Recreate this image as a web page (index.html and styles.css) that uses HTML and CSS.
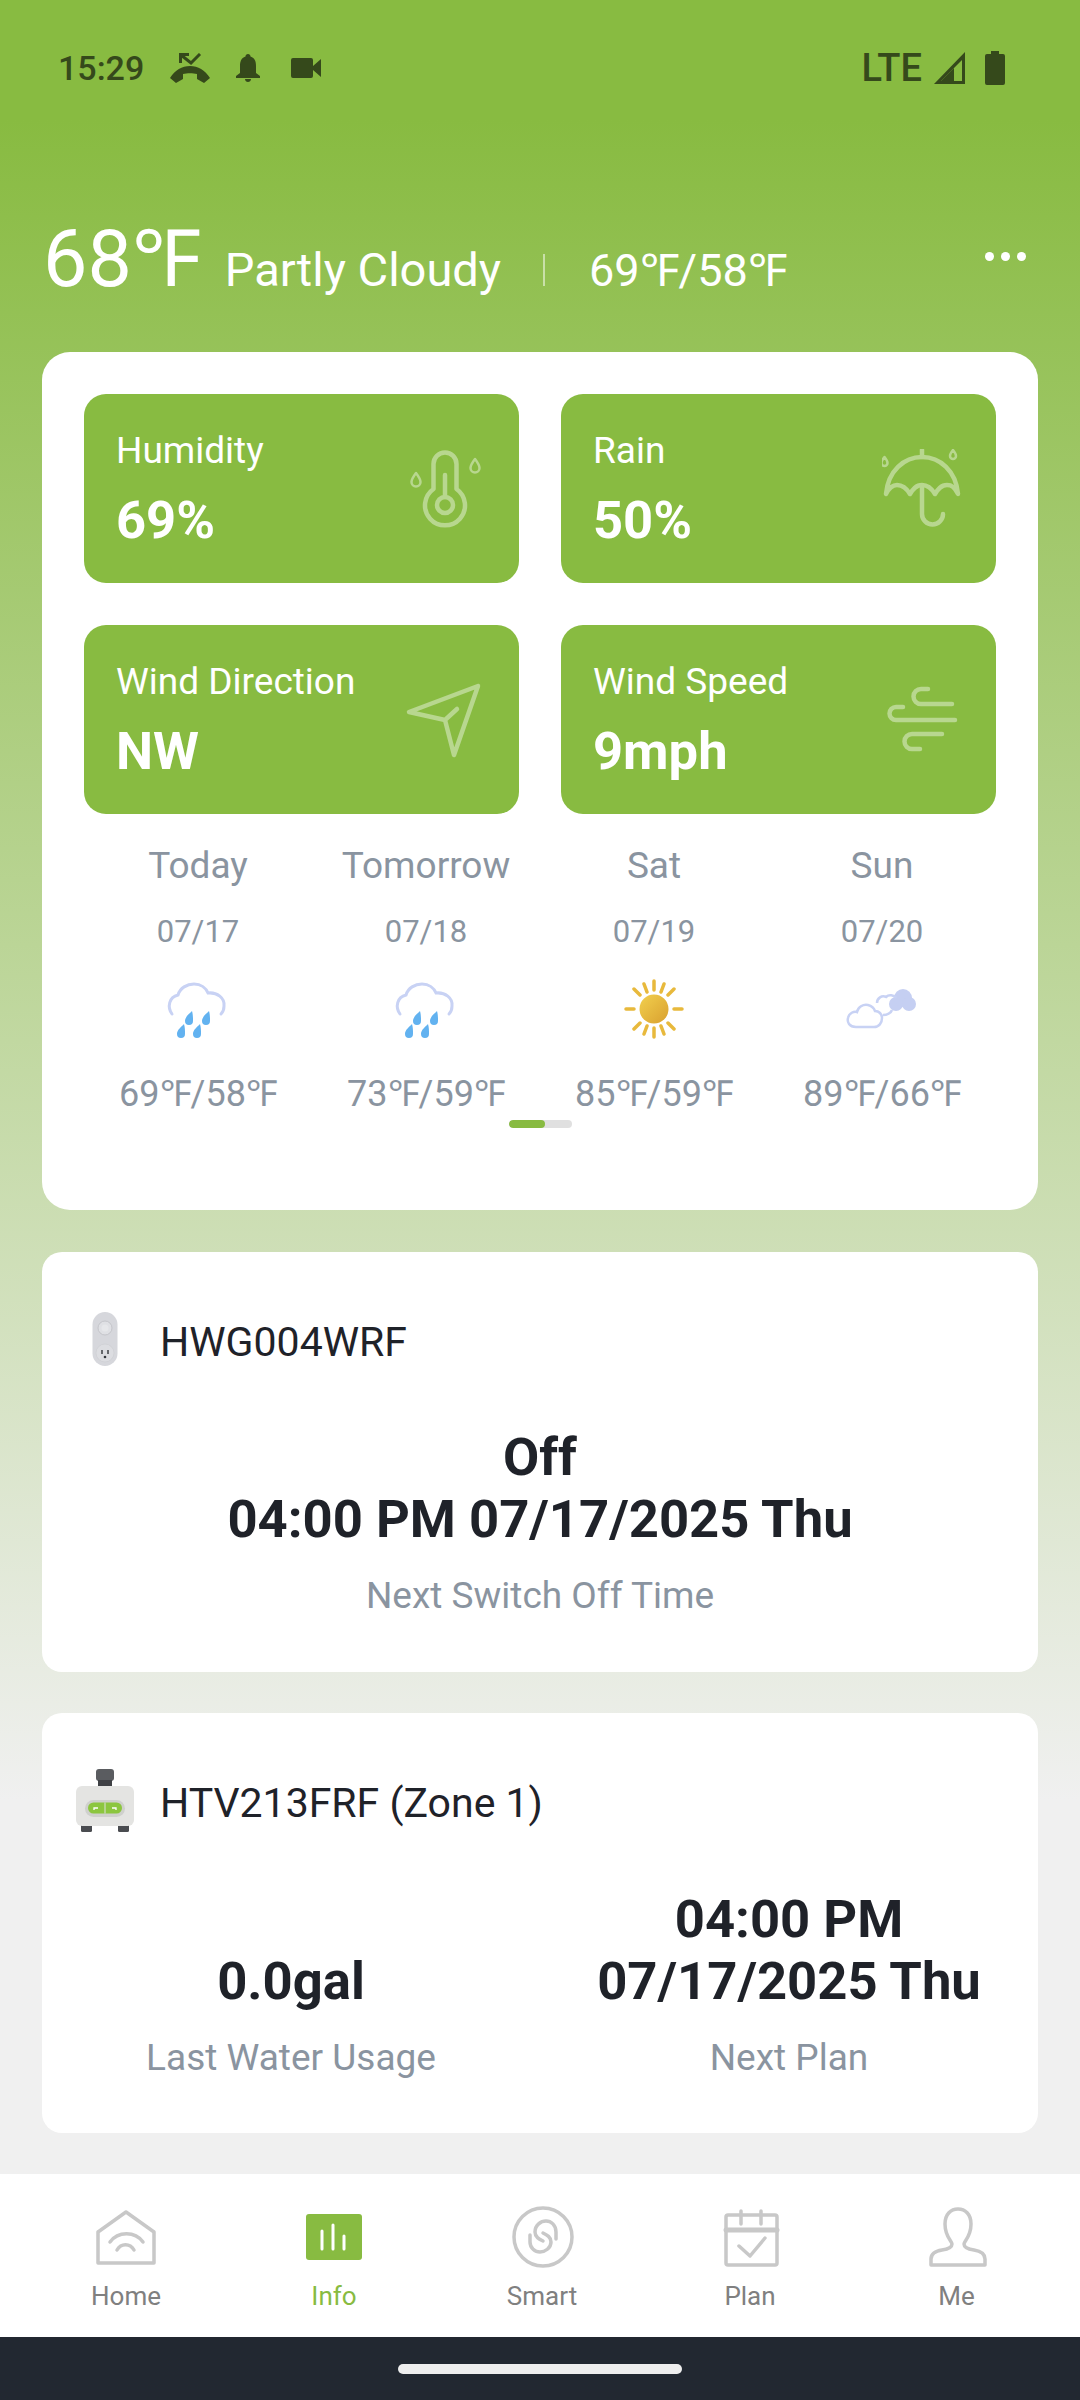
FILE: index.html
```html
<!DOCTYPE html>
<html lang="en">
<head>
  <meta charset="UTF-8" />
  <meta name="viewport" content="width=device-width, initial-scale=1.0"/>
  <title>Info</title>
  <link rel="stylesheet" href="styles.css">
</head>
<body>
  <div class="app">
    <div class="status-bar">
      <div class="status-left">
        <span class="status-time">15:29</span>
        <svg class="ic-call" viewBox="0 0 40 30"><path d="M0 25c5-8 12-12 20-12s15 4 20 12l-6 5-7-4v-5c-4-1-10-1-14 0v5l-7 4z" fill="#35491b"/><path d="M19 1.500h-8.500V10M11 2l10 8 9-9" fill="none" stroke="#35491b" stroke-width="3"/></svg>
        <svg class="ic-bell" viewBox="0 0 24 28"><path d="M12 0c1.500 0 2.500 1 2.500 2.500C19 4 20 8 20 12v7l4 3v2H0v-2l4-3v-7c0-4 1-8 5.500-9.500C9.500 1 10.500 0 12 0zM9 25h6c0 2-1.500 3-3 3s-3-1-3-3z" fill="#35491b"/></svg>
        <svg class="ic-video" viewBox="0 0 30 20"><path d="M2 0h18a2 2 0 0 1 2 2v6l8-7v18l-8-7v6a2 2 0 0 1-2 2H2a2 2 0 0 1-2-2V2a2 2 0 0 1 2-2z" fill="#35491b"/></svg>
      </div>
      <div class="status-right">
        <span class="status-lte">LTE</span>
        <svg class="ic-signal" viewBox="0 0 31 32"><path d="M31 0v32H0zM28 8L7 29h21z" fill="#35491b"/><path d="M20 16v13H7z" fill="#35491b"/></svg>
        <svg class="ic-battery" viewBox="0 0 20 34"><path d="M6 0h8v3h4a2 2 0 0 1 2 2v27a2 2 0 0 1-2 2H2a2 2 0 0 1-2-2V5a2 2 0 0 1 2-2h4z" fill="#35491b"/></svg>
      </div>
    </div>

    <div class="weather-head">
      <span class="temp-now">68℉</span>
      <span class="temp-desc">Partly Cloudy</span>
      <span class="temp-sep"></span>
      <span class="temp-range">69℉/58℉</span>
      <span class="more-dots"><i></i><i></i><i></i></span>
    </div>

    <div class="card weather-card">
      <div class="tiles">
        <div class="tile">
          <div class="tile-text"><div class="tile-label">Humidity</div><div class="tile-value">69%</div></div>
          <svg class="tile-icon" viewBox="0 0 80 80"><path d="M28.500 40V15a11.500 11.500 0 0 1 23 0v25a20 20 0 1 1-23 0z"/><path d="M40 26v22"/><circle cx="40" cy="56" r="8"/><path class="thin" d="M11 24c3 4 4.500 7 4.500 9a4.500 4.500 0 0 1-9 0c0-2 1.500-5 4.500-9zM70 10c3 4 4.500 7 4.500 9a4.500 4.500 0 0 1-9 0c0-2 1.500-5 4.500-9z"/></svg>
        </div>
        <div class="tile">
          <div class="tile-text"><div class="tile-label">Rain</div><div class="tile-value">50%</div></div>
          <svg class="tile-icon" viewBox="0 0 80 80"><path d="M4 45C6 22 22 8 40 8s34 14 36 37C72 38 70 36 65 36c-6 0-9 4-12 9-3-5-7-9-13-9s-9 4-12 9c-3-5-7-9-13-9-5 0-8 3-11 9z"/><path d="M40 1v7M40 37v28a10.500 10.500 0 0 0 21 0"/><path class="thin" d="M2.500 8c2 2.500 3 4.500 3 6a3 3 0 0 1-6 0c0-1.500 1-3.500 3-6zM71 1c2 2.500 3 4.500 3 6a3 3 0 0 1-6 0c0-1.500 1-3.500 3-6z"/></svg>
        </div>
        <div class="tile">
          <div class="tile-text"><div class="tile-label">Wind Direction</div><div class="tile-value">NW</div></div>
          <svg class="tile-icon" viewBox="0 0 80 80"><path d="M73 6L4 32l36 8 9 35zM40 40l12-11"/></svg>
        </div>
        <div class="tile">
          <div class="tile-text"><div class="tile-label">Wind Speed</div><div class="tile-value">9mph</div></div>
          <svg class="tile-icon" viewBox="0 0 80 80"><path d="M46 9h-7a7 7 0 0 0 0 15h31M21 27h-7a6.500 6.500 0 0 0 0 13h59M60 54H30a7.500 7.500 0 0 0 0 15h8"/></svg>
        </div>
      </div>

      <div class="forecast">
        <div class="day">
          <div class="day-name">Today</div>
          <div class="day-date">07/17</div>
          <svg class="day-icon" viewBox="0 0 72 60"><use href="#rain-cloud"/></svg>
          <div class="day-temp">69℉/58℉</div>
        </div>
        <div class="day">
          <div class="day-name">Tomorrow</div>
          <div class="day-date">07/18</div>
          <svg class="day-icon" viewBox="0 0 72 60"><use href="#rain-cloud"/></svg>
          <div class="day-temp">73℉/59℉</div>
        </div>
        <div class="day">
          <div class="day-name">Sat</div>
          <div class="day-date">07/19</div>
          <svg class="day-icon" viewBox="0 0 72 60">
            <defs><linearGradient id="sun-fill" x1="0" y1="0" x2="1" y2="1"><stop offset="0" stop-color="#f2d04e"/><stop offset="1" stop-color="#d9a02f"/></linearGradient></defs>
            <circle cx="36" cy="30" r="14.500" fill="url(#sun-fill)"/>
            <g stroke="#e8b93c" stroke-width="3.500" stroke-linecap="round">
              <path d="M36 2v9M36 49v9M8 30h8M56 30h8M16 10l6 6M50 44l6 6M16 50l6-6M50 16l6-6"/>
              <path d="M26 5l3 8M43 47l3 8M46 5l-3 8M29 47l-3 8"/>
            </g>
          </svg>
          <div class="day-temp">85℉/59℉</div>
        </div>
        <div class="day">
          <div class="day-name">Sun</div>
          <div class="day-date">07/20</div>
          <svg class="day-icon" viewBox="0 0 72 60">
            <circle cx="50" cy="25" r="7" fill="#c5cff2"/><circle cx="57" cy="19" r="9" fill="#c5cff2"/><circle cx="63" cy="25" r="7" fill="#c5cff2"/>
            <path d="M10 48c-7 0-9-5-8-9 1-5 6-7 9-6 1-5 6-8 11-7 4 1 6 3 7 6 4 0 7 3 7 7 0 5-3 9-8 9z" fill="#fff" stroke="#c8d2f4" stroke-width="2.500"/>
            <path d="M31 24c0-5 5-8 9-6 3-3 8-2 10 1" fill="none" stroke="#c8d2f4" stroke-width="2.500"/>
            <path d="M37 36c4 0 8-2 9-5" fill="none" stroke="#c8d2f4" stroke-width="2.500"/>
          </svg>
          <div class="day-temp">89℉/66℉</div>
        </div>
      </div>
      <div class="scroll-track"><div class="scroll-thumb"></div></div>
    </div>

    <div class="card device-card">
      <div class="device-head">
        <svg class="device-icon" viewBox="0 0 64 64">
          <rect x="19.500" y="5" width="25" height="54" rx="12.500" fill="#d6d7dc"/>
          <circle cx="32" cy="21" r="7" fill="#dfe0e4" stroke="#c4c5ca"/><circle cx="32" cy="21" r="3.500" fill="#e6e7ea"/>
          <circle cx="32" cy="46" r="9" fill="#dcdde1" stroke="#cdced3" stroke-width=".7"/>
          <path d="M29 43v4M35 43v4" stroke="#33363b" stroke-width="1.400"/><circle cx="32" cy="50" r="1.300" fill="#33363b"/>
        </svg>
        <span class="device-name">HWG004WRF</span>
      </div>
      <div class="stat-single">
        <div class="stat-value">Off<br>04:00 PM 07/17/2025 Thu</div>
        <div class="stat-label">Next Switch Off Time</div>
      </div>
    </div>

    <div class="card device-card">
      <div class="device-head">
        <svg class="device-icon" viewBox="0 0 64 64">
          <rect x="23" y="1" width="18" height="12" rx="3" fill="#5a5c60"/><rect x="25" y="12" width="14" height="6" fill="#3f4145"/>
          <rect x="8" y="52" width="11" height="12" rx="1.500" fill="#4a4c50"/><rect x="45" y="52" width="11" height="12" rx="1.500" fill="#4a4c50"/>
          <rect x="3" y="18" width="58" height="40" rx="6" fill="#e4e4e2"/>
          <rect x="12" y="32" width="40" height="17" rx="8.500" fill="#cfd0cd"/>
          <rect x="15" y="34.500" width="34" height="11" rx="5.500" fill="#8cc63f"/>
          <path d="M32 34.500v11" stroke="#dfe0de"/>
          <path d="M21 42v-2h4M43 42v-2h-4" stroke="#fff" stroke-width="1.300" fill="none"/>
        </svg>
        <span class="device-name">HTV213FRF (Zone 1)</span>
      </div>
      <div class="stat-pair">
        <div class="stat-col">
          <div class="stat-value">0.0gal</div>
          <div class="stat-label">Last Water Usage</div>
        </div>
        <div class="stat-col">
          <div class="stat-value">04:00 PM<br>07/17/2025 Thu</div>
          <div class="stat-label">Next Plan</div>
        </div>
      </div>
    </div>

    <div class="tab-bar">
      <div class="tab">
        <svg class="tab-icon" viewBox="0 0 64 64"><path d="M4 57V26L32 6l28 20v31z"/><path d="M16 36c8-11 25-11 33 0M23 44c4-7 13-7 17 0"/></svg>
        <span>Home</span>
      </div>
      <div class="tab active">
        <svg class="tab-icon" viewBox="0 0 64 64"><rect x="4" y="8" width="56" height="46" rx="3" class="solid"/><path class="bars" d="M20 25v18M31 19v24M42 30v13"/></svg>
        <span>Info</span>
      </div>
      <div class="tab">
        <svg class="tab-icon" viewBox="0 0 64 64"><circle cx="33" cy="31" r="29"/><path d="M46 33v-7c0-7-5-11-10-11s-11 4-11 11c0 5 4 7 8 9"/><path d="M20 29v7c0 6 5 10 10 10s11-4 11-10c0-5-4-7-8-9"/></svg>
        <span>Smart</span>
      </div>
      <div class="tab">
        <svg class="tab-icon" viewBox="0 0 64 64"><rect x="8" y="9" width="51" height="50" rx="2"/><path class="wide" d="M8 24h51"/><path d="M23 5v13M43 5v13M21 40l11 10 15-18"/></svg>
        <span>Plan</span>
      </div>
      <div class="tab">
        <svg class="tab-icon" viewBox="0 0 64 64"><path d="M6 59v-6c0-5 5-8 11-9 7-1 10-3 10-6 0-3-7-7-7-20 0-10 6-15 13-15s13 5 13 15c0 13-7 17-7 20 0 3 3 5 10 6 6 1 11 4 11 9v6z"/></svg>
        <span>Me</span>
      </div>
    </div>

    <div class="nav-bar"><div class="home-pill"></div></div>
  </div>

  <svg class="icon-defs" width="0" height="0">
    <defs>
      <g id="rain-cloud">
        <path d="M10 35C5 28 7 18 16 16c2-7 9-11 16-11s12 4 14 9c9-1 17 5 16 13 0 3-1 6-3 8" fill="none" stroke="#c8d2f4" stroke-width="3" stroke-linecap="round"/>
        <path d="M30 32c-3 3-7 6-7 10a4 4 0 0 0 8 0c0-3 0-7-1-10zM47 32c-3 3-7 6-7 10a4 4 0 0 0 8 0c0-3 0-7-1-10zM22 45c-3 3-7 6-7 10a4 4 0 0 0 8 0c0-3 0-7-1-10zM38 45c-3 3-7 6-7 10a4 4 0 0 0 8 0c0-3 0-7-1-10z" fill="#62b2f0"/>
      </g>
    </defs>
  </svg>
</body>
</html>
```

FILE: styles.css
```css
* {
  box-sizing: border-box;
}

body {
  margin: 0;
  padding: 0;
  font-family: Roboto, sans-serif;
  background-color: #f0f0f0;
}

.app {
  width: 1080px;
  height: 2400px;
  overflow: hidden;
  display: flex;
  flex-direction: column;
  background: linear-gradient(to bottom, #88bb41 120px, #f0f0f0 1800px);
}

.status-bar {
  height: 136px;
  padding: 50px 75px 0 58px;
  display: flex;
  justify-content: space-between;
  align-items: flex-start;
  color: #35491b;
}

.status-left,
.status-right {
  display: flex;
  align-items: center;
  height: 36px;
}

.status-time {
  font-size: 34px;
  font-weight: 500;
  margin-right: 26px;
}

.ic-call { width: 40px; height: 30px; margin-right: 26px; }
.ic-bell { width: 24px; height: 28px; margin-right: 31px; }
.ic-video { width: 30px; height: 20px; }

.status-lte {
  font-size: 38px;
  font-weight: 500;
  margin-right: 12px;
}

.ic-signal { width: 31px; height: 32px; margin-right: 20px; }
.ic-battery { width: 20px; height: 34px; }

.weather-head {
  height: 216px;
  padding: 66px 0 0 43px;
  display: flex;
  align-items: baseline;
  color: white;
  position: relative;
}

.temp-now {
  font-size: 79px;
  margin-right: 24px;
}

.temp-desc {
  font-size: 47px;
}

.temp-sep {
  width: 2px;
  height: 32px;
  background-color: rgba(255,255,255,0.5);
  margin: 0 44px 0 42px;
}

.temp-range {
  font-size: 45px;
}

.more-dots {
  position: absolute;
  top: 116px;
  left: 985px;
  display: flex;
  gap: 7px;
}

.more-dots i {
  width: 9px;
  height: 9px;
  border-radius: 50%;
  background-color: white;
}

.card {
  background-color: white;
  margin: 0 42px;
  border-radius: 20px;
}

.weather-card {
  height: 858px;
  padding: 42px;
  border-radius: 28px;
}

.tiles {
  display: grid;
  grid-template-columns: 435px 435px;
  grid-auto-rows: 189px;
  gap: 42px;
}

.tile {
  background-color: #88bb41;
  border-radius: 22px;
  padding: 0 34px 0 32px;
  display: flex;
  justify-content: space-between;
  align-items: center;
  color: white;
}

.tile-text {
  padding-top: 2px;
}

.tile-label {
  font-size: 37px;
  line-height: 44px;
  margin-bottom: 17px;
}

.tile-value {
  font-size: 52.500px;
  font-weight: 700;
  line-height: 60px;
}

.tile-icon {
  width: 80px;
  height: 80px;
  fill: none;
  stroke: #b8d78f;
  stroke-width: 4.500;
  stroke-linecap: round;
  stroke-linejoin: round;
}

.tile-icon .thin {
  stroke-width: 2.500;
}

.forecast {
  display: grid;
  grid-template-columns: repeat(4, 228px);
  margin-top: 30px;
  text-align: center;
  color: #8a94a0;
}

.day-name {
  font-size: 37px;
  line-height: 44px;
}

.day-date {
  font-size: 31px;
  line-height: 40px;
  margin-top: 24px;
}

.day-icon {
  display: block;
  width: 72px;
  height: 60px;
  margin: 27px auto 0;
}

.day-temp {
  font-size: 36px;
  line-height: 44px;
  margin-top: 33px;
}

.scroll-track {
  width: 63px;
  height: 8px;
  margin: 4px auto 0;
  background-color: #e0e0e0;
  border-radius: 4px;
  overflow: hidden;
}

.scroll-thumb {
  width: 36px;
  height: 8px;
  background-color: #88bb41;
  border-radius: 4px;
}

.device-card {
  height: 420px;
  margin-top: 42px;
  padding-top: 55px;
}

.device-card + .device-card {
  margin-top: 41px;
}

.device-head {
  display: flex;
  align-items: center;
  padding-left: 31px;
  gap: 23px;
}

.device-icon {
  width: 64px;
  height: 64px;
}

.device-name {
  font-size: 41px;
  margin-top: 5px;
  color: #1f2229;
}

.stat-single {
  margin-top: 55px;
  text-align: center;
}

.stat-value {
  font-size: 52.600px;
  line-height: 62px;
  font-weight: 700;
  color: #1f2229;
}

.stat-label {
  font-size: 37px;
  line-height: 44px;
  color: #8a94a0;
  margin-top: 24px;
}

.stat-pair {
  margin-top: 56px;
  display: grid;
  grid-template-columns: 1fr 1fr;
  align-items: end;
  text-align: center;
}

.tab-bar {
  height: 163px;
  margin-top: 41px;
  background-color: white;
  padding: 32px 22px 0;
  display: grid;
  grid-template-columns: repeat(5, 208px);
  flex: none;
}

.tab {
  display: flex;
  flex-direction: column;
  align-items: center;
  font-size: 26px;
  color: #808080;
}

.tab:last-child {
  padding-right: 3px;
}

.tab span {
  margin-top: 10px;
  line-height: 32px;
}

.tab.active {
  color: #88bb41;
}

.tab-icon {
  width: 64px;
  height: 64px;
  fill: none;
  stroke: #c8c8c8;
  stroke-width: 3.500;
  stroke-linecap: round;
  stroke-linejoin: round;
}

.tab-icon .solid {
  fill: #88bb41;
  stroke: none;
}

.tab-icon .bars {
  stroke: white;
  stroke-width: 3;
}

.tab-icon .wide {
  stroke-width: 5;
}

.nav-bar {
  height: 63px;
  flex: none;
  background-color: #222831;
  padding-top: 27px;
}

.home-pill {
  width: 284px;
  height: 10px;
  margin: 0 auto;
  background-color: #eeeeee;
  border-radius: 5px;
}

.icon-defs {
  position: absolute;
}
```
